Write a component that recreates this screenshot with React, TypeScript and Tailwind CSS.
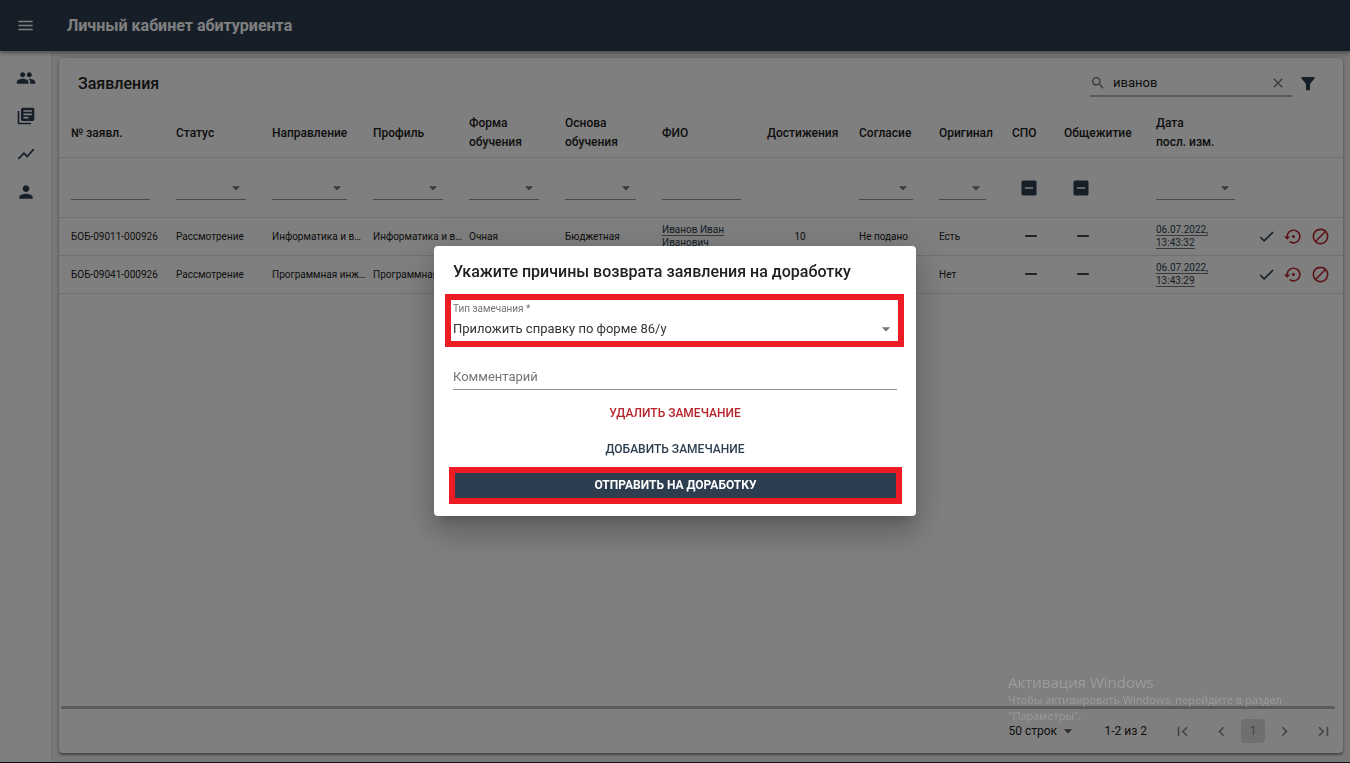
import React, { useState } from 'react';
import {
  MdArrowDropDown,
  MdBlock,
  MdCheck,
  MdChevronLeft,
  MdChevronRight,
  MdClear,
  MdFirstPage,
  MdIndeterminateCheckBox,
  MdLastPage,
  MdLibraryBooks,
  MdMenu,
  MdPeople,
  MdPerson,
  MdRemove,
  MdSearch,
  MdSettingsBackupRestore,
  MdShowChart,
} from 'react-icons/md';

type FilterKind = 'text' | 'select' | 'check' | 'none';

interface Column {
  title: string;
  width: string;
  filter: FilterKind;
}

const columns: Column[] = [
  { title: '№ заявл.', width: 'w-[105px]', filter: 'text' },
  { title: 'Статус', width: 'w-[96px]', filter: 'select' },
  { title: 'Направление', width: 'w-[101px]', filter: 'select' },
  { title: 'Профиль', width: 'w-[96px]', filter: 'select' },
  { title: 'Форма\nобучения', width: 'w-[96px]', filter: 'select' },
  { title: 'Основа\nобучения', width: 'w-[97px]', filter: 'select' },
  { title: 'ФИО', width: 'w-[105px]', filter: 'text' },
  { title: 'Достижения', width: 'w-[92px]', filter: 'none' },
  { title: 'Согласие', width: 'w-[80px]', filter: 'select' },
  { title: 'Оригинал', width: 'w-[73px]', filter: 'select' },
  { title: 'СПО', width: 'w-[52px]', filter: 'check' },
  { title: 'Общежитие', width: 'w-[92px]', filter: 'check' },
  { title: 'Дата\nпосл. изм.', width: 'w-[105px]', filter: 'select' },
];

const applications = [
  {
    id: 'БОБ-09011-000926',
    status: 'Рассмотрение',
    direction: 'Информатика и вычислительная техника',
    profile: 'Информатика и вычислительная техника',
    form: 'Очная',
    basis: 'Бюджетная',
    name: 'Иванов Иван Иванович',
    score: '10',
    consent: 'Не подано',
    original: 'Есть',
    date: '06.07.2022, 13:43:32',
  },
  {
    id: 'БОБ-09041-000926',
    status: 'Рассмотрение',
    direction: 'Программная инженерия',
    profile: 'Программная инженерия',
    form: 'Очная',
    basis: 'Бюджетная',
    name: 'Иванов Иван Иванович',
    score: '10',
    consent: 'Не подано',
    original: 'Нет',
    date: '06.07.2022, 13:43:29',
  },
];

const navItems = [
  { label: 'Пользователи', Icon: MdPeople },
  { label: 'Заявления', Icon: MdLibraryBooks },
  { label: 'Статистика', Icon: MdShowChart },
  { label: 'Профиль', Icon: MdPerson },
];

const FunnelIcon: React.FC = () => (
  <svg viewBox="0 0 20 20" className="size-5" fill="currentColor" aria-hidden="true">
    <path d="M3.5 3h13v1.4L12 10.1v6.2H8v-6.2L3.5 4.4z" />
  </svg>
);

const ColumnFilter: React.FC<{ column: Column }> = ({ column }) => {
  if (column.filter === 'text') {
    return <input type="text" aria-label={column.title} className="block h-6 w-full border-b border-[#949494] outline-none" />;
  }
  if (column.filter === 'select') {
    return (
      <div className="grid items-center">
        <select aria-label={column.title} className="col-start-1 row-start-1 h-6 w-full appearance-none border-b border-[#949494] outline-none" />
        <MdArrowDropDown className="pointer-events-none col-start-1 row-start-1 size-5 justify-self-end text-[#757575]" />
      </div>
    );
  }
  if (column.filter === 'check') {
    return (
      <div className="ml-[7px] grid w-5">
        <input type="checkbox" aria-label={column.title} className="col-start-1 row-start-1 size-5 appearance-none" />
        <MdIndeterminateCheckBox className="pointer-events-none col-start-1 row-start-1 size-5 text-[#2c3e50]" />
      </div>
    );
  }
  return null;
};

const Applications: React.FC = () => {
  const [search, setSearch] = useState('иванов');

  return (
    <section className="flex flex-1 flex-col rounded bg-white shadow-[0_2px_2px_rgba(0,0,0,0.35),0_0_4px_rgba(0,0,0,0.2)]">
      <div className="flex h-[50px] items-center justify-between pl-[19px] pr-[25px] pt-0.5">
        <h2 className="text-[16px] font-medium">Заявления</h2>
        <div className="flex items-center gap-1.5">
          <div className="flex h-[26px] w-[202px] items-center border-b-2 border-[#b4b4b4]">
            <MdSearch className="size-4 text-[#757575]" />
            <input
              type="text"
              aria-label="Поиск"
              value={search}
              onChange={(e) => setSearch(e.target.value)}
              className="ml-[7px] min-w-0 flex-1 text-[13px] outline-none"
            />
            <button aria-label="Очистить" onClick={() => setSearch('')} className="mr-1.5 text-[#757575]">
              <MdClear className="size-4" />
            </button>
          </div>
          <button aria-label="Фильтр" className="text-[#2c3e50]">
            <FunnelIcon />
          </button>
        </div>
      </div>

      <table className="w-full table-fixed text-left text-[10px]">
        <colgroup>
          {columns.map((c) => (
            <col key={c.title} className={c.width} />
          ))}
          <col className="w-[94px]" />
        </colgroup>
        <thead>
          <tr className="h-[49px] border-b border-[#e0e0e0] text-[12px] leading-[19px]">
            {columns.map((c) => (
              <th key={c.title} className="whitespace-pre pl-3 pt-0.5 font-medium">
                {c.title}
              </th>
            ))}
            <th aria-label="Действия" />
          </tr>
        </thead>
        <tbody>
          <tr className="h-[60px] border-b border-[#e0e0e0]">
            {columns.map((c) => (
              <td key={c.title} className="pl-3 pr-3.5 pt-0.5">
                <ColumnFilter column={c} />
              </td>
            ))}
            <td />
          </tr>
          {applications.map((a) => (
            <tr key={a.id} className="h-[38px] border-b border-[#e0e0e0] leading-[13px]">
              <td className="whitespace-nowrap pl-3">{a.id}</td>
              <td className="pl-3">{a.status}</td>
              <td className="pl-3"><span className="-mr-1.5 block truncate">{a.direction}</span></td>
              <td className="pl-3"><span className="-mr-1.5 block truncate">{a.profile}</span></td>
              <td className="pl-3">{a.form}</td>
              <td className="pl-3">{a.basis}</td>
              <td className="pl-3 pr-3.5">
                <a href="#person" className="border-b border-[#757575] text-[#2c3e50]">{a.name}</a>
              </td>
              <td className="pr-0.5 text-center">{a.score}</td>
              <td className="pl-3">{a.consent}</td>
              <td className="pl-3">{a.original}</td>
              <td className="pl-[21px]"><MdRemove className="size-5" /></td>
              <td className="pl-[21px]"><MdRemove className="size-5" /></td>
              <td className="pl-3 pr-8">
                <a href="#history" className="border-b border-[#757575] text-[#2c3e50]">{a.date}</a>
              </td>
              <td>
                <div className="flex items-center gap-2 pl-2">
                  <button aria-label="Принять" className="text-[#2c3e50]"><MdCheck className="size-[19px]" /></button>
                  <button aria-label="Вернуть на доработку" className="text-[#b8242c]"><MdSettingsBackupRestore className="size-[19px]" /></button>
                  <button aria-label="Отклонить" className="text-[#b8242c]"><MdBlock className="size-[19px]" /></button>
                </div>
              </td>
            </tr>
          ))}
        </tbody>
      </table>

      <div className="ml-0.5 mr-2 mt-auto h-[3px] rounded-full bg-[#b4b4b4]" />
      <footer className="flex h-11 items-center justify-end pr-2.5 text-[12px]">
        <div className="mr-[26px] grid w-[70px] items-center">
          <select aria-label="Строк на странице" className="col-start-1 row-start-1 w-full appearance-none outline-none">
            <option>50 строк</option>
          </select>
          <MdArrowDropDown className="pointer-events-none col-start-1 row-start-1 size-5 justify-self-end text-[#555]" />
        </div>
        <span className="mr-[26px]">1-2 из 2</span>
        <nav aria-label="Страницы" className="flex items-center gap-5 text-[#8a8a8a]">
          <button aria-label="Первая страница"><MdFirstPage className="size-[19px]" /></button>
          <div className="flex items-center gap-2.5">
            <button aria-label="Предыдущая страница"><MdChevronLeft className="size-[19px]" /></button>
            <button className="size-6 rounded-sm bg-[#dedede]">1</button>
            <button aria-label="Следующая страница"><MdChevronRight className="size-[19px]" /></button>
          </div>
          <button aria-label="Последняя страница"><MdLastPage className="size-[19px]" /></button>
        </nav>
      </footer>
    </section>
  );
};

const ReturnDialog: React.FC = () => {
  const [comment, setComment] = useState('');

  return (
    <div
      role="dialog"
      aria-labelledby="return-title"
      className="flex w-[482px] flex-col rounded bg-white pb-3 pt-3.5 shadow-[0_9px_12px_-6px_rgba(0,0,0,0.2),0_19px_30px_2px_rgba(0,0,0,0.14),0_7px_37px_6px_rgba(0,0,0,0.12)]"
    >
      <h2 id="return-title" className="px-[19px] text-[16px] font-medium leading-6">
        Укажите причины возврата заявления на доработку
      </h2>

      <div className="ml-[11px] mr-3 mt-2.5 h-[53px] border-6 border-[#ed1c24] px-0.5 py-0.5">
        <label htmlFor="remark" className="block text-[10px] leading-[14px] text-[#757575]">Тип замечания *</label>
        <div className="grid items-center">
          <select id="remark" className="col-start-1 row-start-1 h-[26px] w-full appearance-none text-[13px] text-[#333] outline-none">
            <option>Приложить справку по форме 86/у</option>
          </select>
          <MdArrowDropDown className="pointer-events-none col-start-1 row-start-1 size-5 justify-self-end text-[#757575]" />
        </div>
      </div>

      <input
        type="text"
        aria-label="Комментарий"
        placeholder="Комментарий"
        value={comment}
        onChange={(e) => setComment(e.target.value)}
        className="mx-[19px] mt-[18px] h-[25px] border-b border-[#949494] text-[13px] outline-none placeholder:text-[#757575]"
      />

      <button className="mx-[19px] mt-2 h-[30px] text-[12px] font-medium uppercase text-[#b8242c]">Удалить замечание</button>
      <button className="mx-[19px] mt-1.5 h-[30px] text-[12px] font-medium uppercase text-[#2c3e50]">Добавить замечание</button>
      <button className="ml-[15px] mr-3.5 mt-[3px] h-[37px] border-6 border-[#ed1c24] bg-[#2c3e50] text-[12px] font-bold uppercase text-white">
        Отправить на доработку
      </button>
    </div>
  );
};

export default function App() {
  return (
    <div className="flex h-screen flex-col overflow-hidden border-b border-[#222] bg-[#fafafa] font-[Roboto,sans-serif] text-[#212121]">
      <header className="z-10 flex h-[51px] shrink-0 items-center gap-8 bg-[#2c3e50] px-4 text-white shadow-[0_2px_4px_rgba(0,0,0,0.4)]">
        <button aria-label="Меню"><MdMenu className="size-[19px]" /></button>
        <h1 className="text-[16px] font-bold">Личный кабинет абитуриента</h1>
      </header>

      <div className="flex min-h-0 flex-1">
        <nav className="flex w-[52px] shrink-0 flex-col items-center gap-[18px] border-r border-[#e0e0e0] bg-white pt-[17px] text-[#2c3e50]">
          {navItems.map(({ label, Icon }) => (
            <a key={label} href="#nav" aria-label={label}><Icon className="size-5" /></a>
          ))}
        </nav>
        <main className="flex min-w-0 flex-1 bg-[#f0f0f0] px-[7px] pb-[9px] pt-[7px]">
          <Applications />
        </main>
      </div>

      <div className="fixed inset-0 z-20 flex items-center justify-center bg-black/50 pb-0.5">
        <ReturnDialog />
      </div>

      <div className="pointer-events-none fixed bottom-[39px] right-[42px] z-30 w-[300px] font-['Open_Sans','Noto_Sans',sans-serif] text-[#9c9c9c]">
        <p className="text-[15px] leading-5">Активация Windows</p>
        <p className="text-[11px] leading-4">
          Чтобы активировать Windows, перейдите в раздел
          <br />
          "Параметры".
        </p>
      </div>
    </div>
  );
}
